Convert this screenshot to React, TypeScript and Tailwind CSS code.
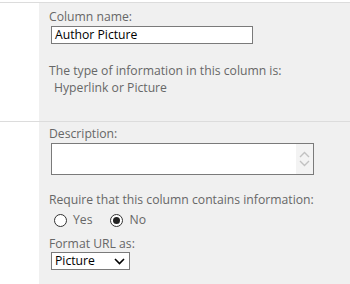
import React from "react";

export default function App() {
  const font = { fontFamily: '"Open Sans", "Liberation Sans", sans-serif' };
  return (
    <div className="w-[350px] h-[284px] bg-white overflow-hidden text-[12.2px] text-[#676767]" style={font}>
      <div className="h-[2px]" />
      <div className="flex border-t border-[#dcdcdc] h-[119px]">
        <div className="w-[39px] bg-white" />
        <div className="flex-1 bg-[#f0f0f0] pl-[10px] pt-[6px]">
          <div className="leading-[16px]">Column name:</div>
          <div className="mt-[1px] ml-[2px] w-[202px] h-[18px] border border-[#7a7a7a] bg-white text-black leading-[16px] px-[3px]">
            Author Picture
          </div>
          <div className="mt-[19px] leading-[16px]">The type of information in this column is:</div>
          <div className="mt-[1px] ml-[5px] leading-[16px]">Hyperlink or Picture</div>
        </div>
      </div>
      <div className="flex border-t border-[#dcdcdc] h-[163px]">
        <div className="w-[39px] bg-white" />
        <div className="flex-1 bg-[#f0f0f0] pl-[10px] pt-[4px]">
          <div className="leading-[16px]">Description:</div>
          <div className="mt-[1px] ml-[2px] w-[263px] h-[32px] border border-[#7a7a7a] bg-white flex justify-end">
            <div className="w-[17px] bg-[#f3f3f3] flex flex-col items-center justify-center gap-[2px]">
              <svg width="11" height="7" viewBox="0 0 11 7"><path d="M1 6 L5.5 1.5 L10 6" fill="none" stroke="#c2c2c2" strokeWidth="1.4" /></svg>
              <svg width="11" height="7" viewBox="0 0 11 7"><path d="M1 1 L5.5 5.5 L10 1" fill="none" stroke="#c2c2c2" strokeWidth="1.4" /></svg>
            </div>
          </div>
          <div className="mt-[17px] leading-[16px]">Require that this column contains information:</div>
          <div className="mt-[4px] flex items-center h-[16px] ml-[5px]">
            <span className="w-[13px] h-[13px] rounded-full border border-[#333] bg-white" />
            <span className="ml-[6px]">Yes</span>
            <span className="ml-[18px] w-[13px] h-[13px] rounded-full border border-[#333] bg-white flex items-center justify-center">
              <span className="w-[7px] h-[7px] rounded-full bg-[#222]" />
            </span>
            <span className="ml-[6px]">No</span>
          </div>
          <div className="mt-[8px] leading-[16px]">Format URL as:</div>
          <div className="mt-0 ml-[2px] w-[79px] h-[18px] border border-[#7a7a7a] bg-white text-black leading-[16px] pl-[3px] flex items-center justify-between pr-[4px]">
            <span>Picture</span>
            <svg width="11" height="7" viewBox="0 0 11 7"><path d="M1 1 L5.5 5.5 L10 1" fill="none" stroke="#000" strokeWidth="1.6" /></svg>
          </div>
        </div>
      </div>
    </div>
  );
}
